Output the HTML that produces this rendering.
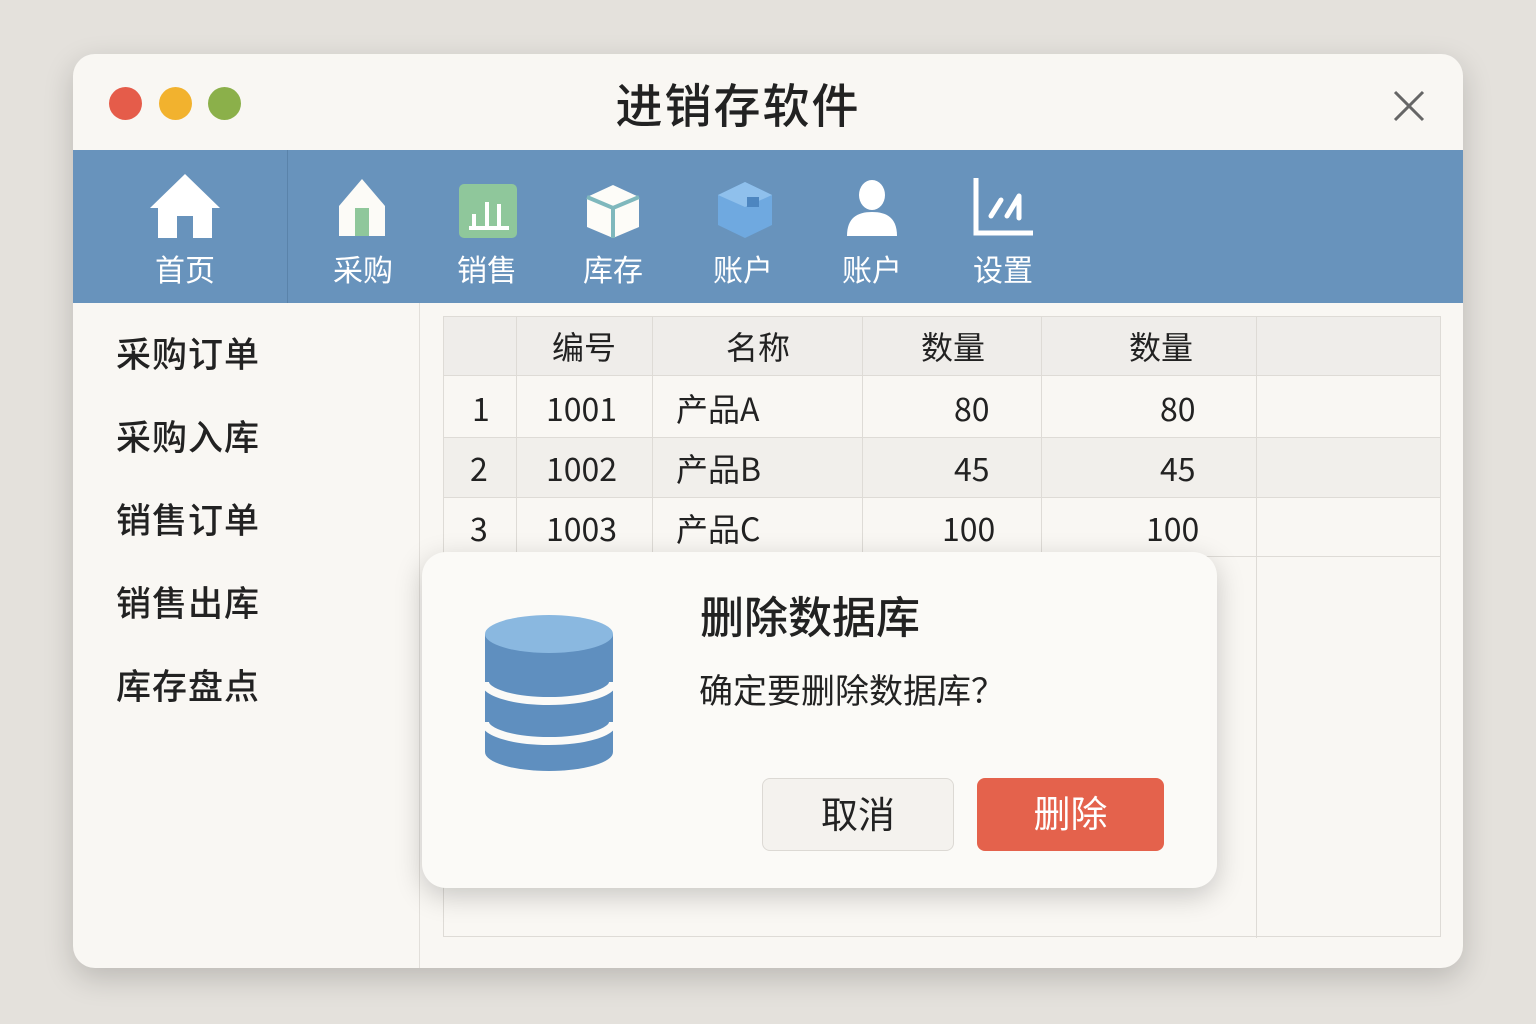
<!DOCTYPE html>
<html><head><meta charset="utf-8"><style>
*{box-sizing:border-box;margin:0;padding:0}
body{width:1536px;height:1024px;background:#e4e1dc;font-family:"Liberation Sans","Noto Sans CJK SC",sans-serif;position:relative;overflow:hidden;color:#222}
.win{position:absolute;left:73px;top:54px;width:1390px;height:914px;background:#f9f7f3;border-radius:22px;box-shadow:0 10px 30px rgba(0,0,0,.18);overflow:hidden}
.dot{position:absolute;top:33px;width:33px;height:33px;border-radius:50%}
.title{position:absolute;left:-30px;width:100%;top:14px;text-align:center;font-size:47px;font-weight:500;color:#222;letter-spacing:2px}
.tb{position:absolute;left:0;top:96px;width:1390px;height:153px;background:#6893bc}
.tb .sep{position:absolute;left:214px;top:0;width:1px;height:153px;background:#5a83aa}
.lbl{position:absolute;top:96px;color:#fff;font-size:30px;text-align:center;width:120px}
.ic{position:absolute}
.side{position:absolute;left:0;top:249px;width:347px;height:665px;border-right:1px solid #e2dfda}
.side div{position:absolute;left:43px;font-size:35px;font-weight:500;color:#222;letter-spacing:1px}
.tbl{position:absolute;left:370px;top:262px;width:998px;height:621px;border:1px solid #dedbd6;background:#f9f7f3}
.row{position:absolute;left:0;width:996px;border-bottom:1px solid #dedbd6}
.vl{position:absolute;top:0;width:1px;background:#dedbd6}
.c{position:absolute;font-size:32px;color:#222;line-height:40px;font-family:"Noto Sans CJK SC",sans-serif}
.dlg{position:absolute;left:422px;top:552px;width:795px;height:336px;background:#fbfaf7;border-radius:24px;box-shadow:0 8px 28px rgba(0,0,0,.2)}
.btn{position:absolute;top:226px;height:73px;border-radius:8px;font-size:37px;text-align:center;line-height:73px}
</style></head><body>
<div class="win">
<div class="dot" style="left:36px;background:#e55c4a"></div>
<div class="dot" style="left:86px;background:#f2b22e"></div>
<div class="dot" style="left:135px;background:#8bb04a"></div>
<div class="title">进销存软件</div>
<svg class="ic" style="left:1320px;top:36px" width="32" height="32"><path d="M2 2L30 30M30 2L2 30" stroke="#666" stroke-width="3"/></svg>
<div class="tb"><div class="sep"></div>
<svg class="ic" style="left:76px;top:22px" width="72" height="66"><path d="M36 2L71 36H63V66H44V44H28V66H9V36H1Z" fill="#fff"/></svg>
<div class="lbl" style="left:52px">首页</div>
<svg class="ic" style="left:264px;top:28px" width="50" height="60"><path d="M25 1L48 28V58H2V28Z" fill="#fcfbf7"/><rect x="18" y="30" width="14" height="28" fill="#8fc79b"/></svg>
<div class="lbl" style="left:230px">采购</div>
<svg class="ic" style="left:386px;top:34px" width="58" height="54"><rect width="58" height="54" rx="5" fill="#8fc79b"/><path d="M10 44H50M15 44V30M28 44V18M40 44V20" stroke="#fff" stroke-width="4"/></svg>
<div class="lbl" style="left:354px">销售</div>
<svg class="ic" style="left:513px;top:34px" width="54" height="54"><path d="M27 1L53 13V43L27 54L1 43V13Z" fill="#fdfcf8"/><path d="M1 13L27 24L53 13M27 24V54" stroke="#7fb8bd" stroke-width="4" fill="none"/></svg>
<div class="lbl" style="left:480px">库存</div>
<svg class="ic" style="left:644px;top:31px" width="56" height="58"><path d="M28 1L55 14V44L28 57L1 44V14Z" fill="#6fa9e0"/><path d="M28 1L55 14L28 26L1 14Z" fill="#8fc0ec"/><rect x="30" y="16" width="12" height="10" fill="#4d86c0"/></svg>
<div class="lbl" style="left:610px">账户</div>
<svg class="ic" style="left:773px;top:30px" width="52" height="56"><ellipse cx="26" cy="15" rx="13" ry="15" fill="#fff"/><path d="M1 56C1 38 11 32 26 32S51 38 51 56Z" fill="#fff"/></svg>
<div class="lbl" style="left:739px">账户</div>
<svg class="ic" style="left:900px;top:28px" width="60" height="58"><path d="M3 0V55H60" stroke="#fff" stroke-width="5" fill="none"/><path d="M18 38L28 22M34 38L46 18M46 18V40" stroke="#fff" stroke-width="5" stroke-linecap="round"/></svg>
<div class="lbl" style="left:870px">设置</div>
</div>
<div class="side">
<div style="top:24px">采购订单</div><div style="top:107px">采购入库</div><div style="top:190px">销售订单</div><div style="top:273px">销售出库</div><div style="top:356px">库存盘点</div>
</div>
<div class="tbl">
<div class="row" style="top:0;height:59px;background:#efedea"></div>
<div class="row" style="top:59px;height:62px"></div>
<div class="row" style="top:121px;height:60px;background:#f1efeb"></div>
<div class="row" style="top:181px;height:59px"></div>
<div class="vl" style="left:72px;height:240px"></div>
<div class="vl" style="left:208px;height:240px"></div>
<div class="vl" style="left:418px;height:240px"></div>
<div class="vl" style="left:597px;height:240px"></div>
<div class="vl" style="left:812px;height:621px"></div>
<div class="c" style="left:108px;top:9px">编号</div>
<div class="c" style="left:282px;top:9px">名称</div>
<div class="c" style="left:477px;top:9px">数量</div>
<div class="c" style="left:685px;top:9px">数量</div>
<div class="c" style="left:28px;top:71px">1</div><div class="c" style="left:102px;top:71px">1001</div><div class="c" style="left:232px;top:71px">产品A</div><div class="c" style="left:510px;top:71px">80</div><div class="c" style="left:716px;top:71px">80</div>
<div class="c" style="left:26px;top:131px">2</div><div class="c" style="left:102px;top:131px">1002</div><div class="c" style="left:232px;top:131px">产品B</div><div class="c" style="left:510px;top:131px">45</div><div class="c" style="left:716px;top:131px">45</div>
<div class="c" style="left:26px;top:191px">3</div><div class="c" style="left:102px;top:191px">1003</div><div class="c" style="left:232px;top:191px">产品C</div><div class="c" style="left:498px;top:191px">100</div><div class="c" style="left:702px;top:191px">100</div>
</div>
</div>
<div class="dlg">
<svg class="ic" style="left:62px;top:62px" width="130" height="158"><path d="M1 20V138A64 19 0 0 0 129 138V20Z" fill="#5f8fbf"/><ellipse cx="65" cy="20" rx="64" ry="19" fill="#8ab8e0"/><path d="M1 68A64 19 0 0 0 129 68M1 108A64 19 0 0 0 129 108" stroke="#fbfaf7" stroke-width="8" fill="none"/></svg>
<div style="position:absolute;left:278px;top:30px;font-size:44px;font-weight:500">删除数据库</div>
<div style="position:absolute;left:277px;top:112px;font-size:34px">确定要删除数据库？</div>
<div class="btn" style="left:340px;width:192px;background:#f4f2ee;border:1px solid #dcd9d4;color:#222">取消</div>
<div class="btn" style="left:555px;width:187px;background:#e4624c;color:#fff">删除</div>
</div>
</body></html>
